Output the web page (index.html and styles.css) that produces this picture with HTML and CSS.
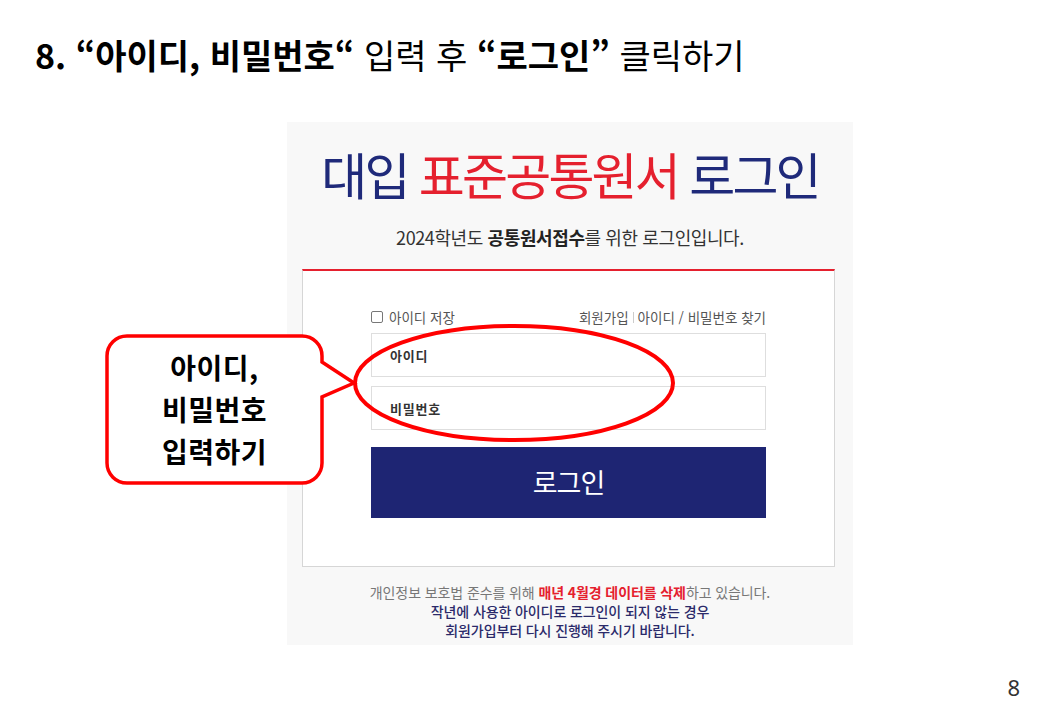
FILE: index.html
```html
<!DOCTYPE html>
<html lang="ko">
<head>
<meta charset="utf-8">
<title>로그인 안내</title>
<link rel="stylesheet" href="styles.css">
</head>
<body>
<div class="slide">
  <h1 class="slide-title"><b>8. “아이디, 비밀번호“</b> 입력 후 <b>“로그인”</b> 클릭하기</h1>

  <div class="panel">
    <div class="brand"><span class="navy">대입</span> <span class="red">표준공통원서</span> <span class="navy">로그인</span></div>
    <div class="sub">2024학년도 <b>공통원서접수</b>를 위한 로그인입니다.</div>

    <div class="login-box">
      <div class="opts">
        <label class="save"><span class="chk"></span>아이디 저장</label>
        <div class="links">회원가입<span class="sep"></span>아이디 / 비밀번호 찾기</div>
      </div>
      <div class="field">아이디</div>
      <div class="field">비밀번호</div>
      <div class="btn">로그인</div>
    </div>

    <div class="notice">
      <p class="gray">개인정보 보호법 준수를 위해 <b class="red">매년 4월경 데이터를 삭제</b>하고 있습니다.</p>
      <p class="dark">작년에 사용한 아이디로 로그인이 되지 않는 경우</p>
      <p class="dark">회원가입부터 다시 진행해 주시기 바랍니다.</p>
    </div>
  </div>

  <svg class="overlay" width="1040" height="720" viewBox="0 0 1040 720">
    <path d="M127,336 H302 A20,20 0 0 1 322,356 V362 L354,383 L322,397 V463 A20,20 0 0 1 302,483 H127 A20,20 0 0 1 107,463 V356 A20,20 0 0 1 127,336 Z" fill="#ffffff" stroke="#ff0000" stroke-width="3.5" stroke-linejoin="miter"/>
    <ellipse cx="514" cy="383" rx="159" ry="57" fill="none" stroke="#ff0000" stroke-width="4"/>
  </svg>
  <div class="callout">아이디,<br>비밀번호<br>입력하기</div>

  <div class="page-num">8</div>
</div>
</body>
</html>
```

FILE: styles.css
```css
* { box-sizing: border-box; }
html, body { margin: 0; padding: 0; background: #ffffff; }
body { font-family: "Noto Sans CJK KR", "Noto Sans", sans-serif; }

.slide {
  position: relative;
  width: 1040px;
  height: 720px;
  overflow: hidden;
  background: #ffffff;
}

.slide-title {
  margin: 0;
  padding: 33px 0 0 35px;
  height: 70px;
  font-size: 34px;
  line-height: 44px;
  font-weight: 400;
  color: #000;
  letter-spacing: 0;
  white-space: nowrap;
}
.slide-title b { font-weight: 700; }

.panel {
  margin: 52px 0 0 287px;
  width: 566px;
  height: 523px;
  background: #f8f8f8;
  padding-top: 20px;
  display: flex;
  flex-direction: column;
}

.brand {
  text-align: center;
  font-size: 50px;
  line-height: 62px;
  letter-spacing: -2.8px;
  font-weight: 400;
  padding-left: 0;
}
.navy { color: #1f2a7a; }
.red { color: #e5202e; }

.sub {
  margin-top: 21px;
  text-align: center;
  font-size: 18px;
  line-height: 24px;
  color: #333;
  letter-spacing: -0.4px;
}
.sub b { font-weight: 700; color: #222; }

.login-box {
  margin: 20px 0 0 15px;
  width: 533px;
  background: #fff;
  border: 1px solid #d6d6d6;
  border-top: 2px solid #e5202e;
  padding: 37px 68px 48px;
  display: flex;
  flex-direction: column;
}

.opts {
  display: flex;
  justify-content: space-between;
  align-items: center;
  height: 18px;
  font-size: 13.5px;
  color: #555;
  letter-spacing: 0;
}
.save { display: flex; align-items: center; gap: 6px; }
.chk {
  width: 12px;
  height: 12px;
  border: 1px solid #777;
  border-radius: 2px;
  background: #fff;
}
.links { display: flex; align-items: center; }
.sep {
  display: inline-block;
  width: 1px;
  height: 11px;
  background: #ccc;
  margin: 0 4px;
}

.field {
  margin-top: 7px;
  height: 44px;
  border: 1px solid #dedede;
  background: #fff;
  padding-left: 18px;
  display: flex;
  align-items: center;
  font-size: 13px;
  letter-spacing: 0.8px;
  font-weight: 700;
  color: #333;
}
.field + .field { margin-top: 9px; }

.btn {
  margin-top: 17px;
  height: 71px;
  background: #1e2573;
  color: #fff;
  display: flex;
  align-items: center;
  justify-content: center;
  font-size: 27px;
  letter-spacing: -1px;
  padding-bottom: 2px;
}

.notice {
  margin-top: 16px;
  text-align: center;
  font-size: 14px;
  line-height: 19px;
  letter-spacing: -0.1px;
}
.notice p { margin: 0; }
.gray { color: #777; }
.gray .red { color: #e5202e; font-weight: 700; }
.dark { color: #2b2a6a; font-weight: 500; }

.overlay {
  position: absolute;
  left: 0;
  top: 0;
  pointer-events: none;
}

.callout {
  position: absolute;
  left: 107px;
  top: 346px;
  width: 215px;
  text-align: center;
  font-size: 28px;
  line-height: 42px;
  letter-spacing: 0.5px;
  font-weight: 700;
  color: #000;
}

.page-num {
  position: absolute;
  right: 20px;
  bottom: 18px;
  font-size: 22px;
  color: #333;
  font-family: "Noto Sans", sans-serif;
}
```
